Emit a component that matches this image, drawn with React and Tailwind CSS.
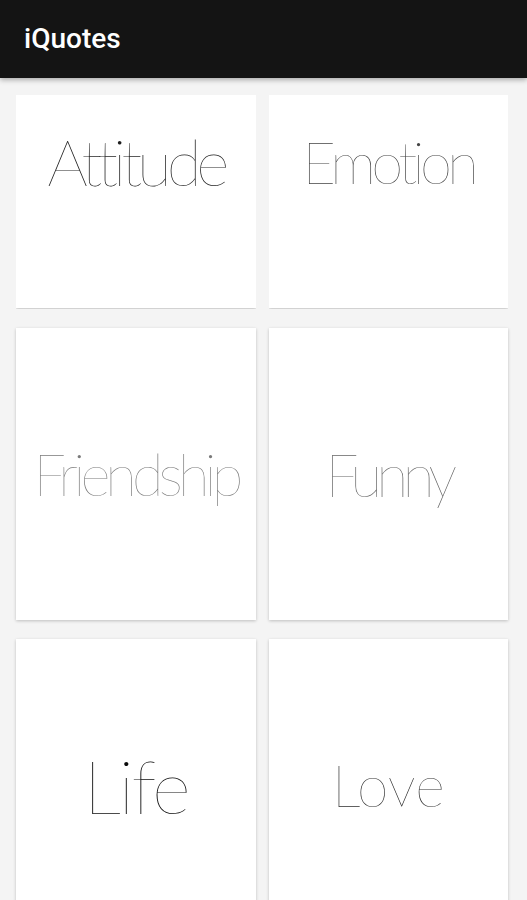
const topics = [
  { name: 'Attitude', cls: 'text-[64px] text-[#1e1e1e] tracking-[-0.08em]' },
  { name: 'Emotion', cls: 'text-[58px] text-[#444444] tracking-[-0.08em]' },
  { name: 'Friendship', cls: 'text-[58px] text-[#7a7a7a] tracking-[-0.085em]' },
  { name: 'Funny', cls: 'text-[59px] text-[#666666] tracking-[-0.1em]' },
  { name: 'Life', cls: 'text-[75px] text-[#0a0a0a] tracking-[-0.035em]' },
  { name: 'Love', cls: 'text-[57px] text-[#2e2e2e] tracking-[0em]' },
];

function Card({ topic }) {
  return (
    <div className="flex h-[292px] shrink-0 items-center justify-center bg-white shadow-[0_1px_3px_rgba(0,0,0,0.22)]">
      <span className={`${topic.cls} font-['Lato',sans-serif] font-thin leading-none`}>{topic.name}</span>
    </div>
  );
}

export default function App() {
  return (
    <div className="h-[900px] w-[527px] overflow-hidden bg-[#f4f4f4]">
      {/* barra superior */}
      <header className="relative z-10 flex h-[78px] items-center bg-[#141414] px-6 shadow-[0_2px_5px_rgba(0,0,0,0.3)]">
        <h1 className="font-['Roboto',sans-serif] text-[28px] font-medium text-white">iQuotes</h1>
      </header>

      <div className="grid grid-cols-2 gap-x-[13px] gap-y-[19px] pl-4 pr-[19px] pt-[17px]">
        {topics.map((t, i) =>
          i < 2 ? (
            <div key={t.name} className="flex h-[214px] flex-col justify-end overflow-hidden pb-[1px]">
              <Card topic={t} />
            </div>
          ) : (
            <Card key={t.name} topic={t} />
          )
        )}
      </div>
    </div>
  );
}
